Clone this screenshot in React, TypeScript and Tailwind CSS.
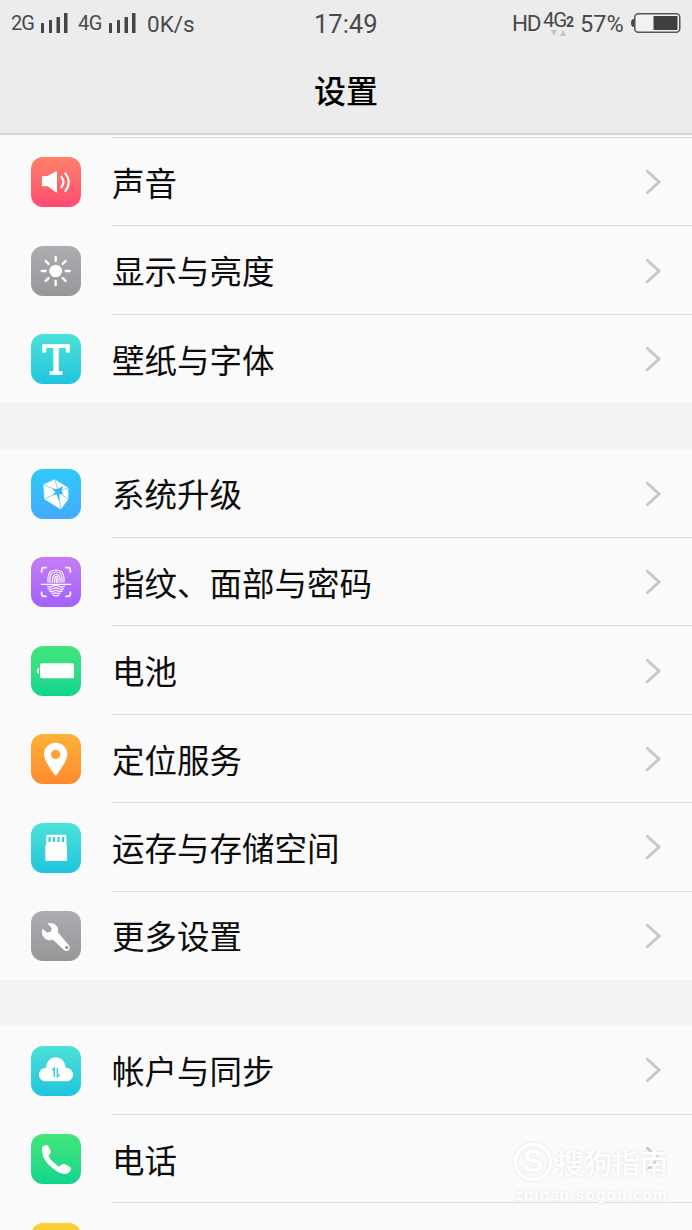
import React from "react";

type Item = { label: string; bg: string; icon: React.ReactNode };

const SoundIcon = () => (
  <>
    <path d="M35 57h15l25-14q3-1 3 2v60q0 3-3 1l-25-18h-15q-2 0-2-2v-27q0-2 2-2z" fill="#fff" />
    <path d="M91 60q13 15 0 31M103 49q21 26 0 53" fill="none" stroke="#fff" strokeWidth="6.500" strokeLinecap="round" />
  </>
);

const SunIcon = () => (
  <>
    <circle cx="74" cy="75" r="19" fill="#fff" />
    {[0, 45, 90, 135, 180, 225, 270, 315].map((deg) => (
      <path
        key={deg}
        d="M74 33v12"
        stroke="#fff"
        strokeWidth="7"
        strokeLinecap="round"
        transform={`rotate(${deg} 74 75)`}
      />
    ))}
  </>
);

const FontIcon = () => (
  <text
    x="74.5"
    y="119"
    textAnchor="middle"
    fontSize="120"
    fill="#fff"
    stroke="#fff"
    strokeWidth="4"
    className="font-['DejaVu_Serif',serif]"
  >
    T
  </text>
);

const UpgradeIcon = () => (
  <>
    <path d="M71 32l40 25v34l-22 29-48-30-3-43z" fill="#fff" stroke="#fff" strokeWidth="2" strokeLinejoin="round" />
    <path d="M83 68L71 32M84 66l27-9M84 70l28 21M83 70l6 50M82 70l-41 20M82 66L38 47" stroke="#45b9fb" strokeWidth="2" />
    <path d="M64 59l16 1 17-9-6 14 6 11-12-1-2 20-6-19-12 3 8-10z" fill="#32b5f8" />
  </>
);

const FingerprintIcon = () => (
  <g fill="none" stroke="#fff" strokeLinecap="round">
    <path d="M32 45v-7q0-6 6-6h7M105 32h7q6 0 6 6v7M118 105v7q0 6-6 6h-7M45 118h-7q-6 0-6-6v-7" strokeWidth="5" />
    <path d="M31 82h88" strokeWidth="4" />
    <path
      d="M51 75V62q2-23 24-23t24 23v13M57 76V63q1-18 18-18t18 18v13M63 76q3-4 2-12 1-12 10-12 11 0 12 13v11M70 76q2-6 1-12 1-6 4-6 6 0 6 8v10M76 76V65M50 88q7 5 14 0 10-5 20 0 8 5 16 0M51 95q8 4 15 0 9-5 17 0 8 4 15 0M55 102q7 3 13 0 7-4 13 0 7 3 13 0M61 108q7 2 12-1 8 4 15 1M66 114q9 5 18 0"
      strokeWidth="3.500"
    />
  </g>
);

const BatteryIcon = () => (
  <>
    <rect x="27" y="52" width="102" height="45" rx="5" fill="#fff" />
    <path d="M24 65v19q-7-1-7-9.500t7-9.500z" fill="#fff" />
  </>
);

const LocationIcon = () => (
  <path
    d="M74 26c20 0 35 15 35 34 0 17-13 36-32 62q-3 3-6 0C52 96 39 77 39 60c0-19 15-34 35-34zm0 21a14 14 0 1 0 0 28 14 14 0 0 0 0-28z"
    fill="#fff"
    fillRule="evenodd"
  />
);

const StorageIcon = () => (
  <>
    <path d="M48 35h55q3 0 3 3v26l2 4v42q0 4-4 4H47q-4 0-4-4V68l3-4V38q0-3 2-3z" fill="#fff" />
    <path d="M55.500 42v15M69 42v15M82.500 42v15M96 42v15" stroke="#3acbd5" strokeWidth="6.500" />
  </>
);

const WrenchIcon = () => (
  <path
    d="M49 37l13 15-1 9-12 4-14-12q-5 13 1 23t16 12q7 1 12-3l34 31q9 8 16 0 6-8-3-16L80 63q4-13-6-21-10-9-25-5zm56 68a5 5 0 1 1-1 8 5 5 0 0 1 1-8z"
    fill="#fff"
    fillRule="evenodd"
  />
);

const CloudIcon = () => (
  <>
    <path d="M45 106c-12 0-21-8-21-20s9-20 21-20c1-19 13-32 29-32s28 12 30 31c13 0 22 9 22 21s-9 20-21 20z" fill="#fff" />
    <path d="M64 73l6-6v26M79 66v26l7-6" fill="none" stroke="#43c9d8" strokeWidth="4.500" />
  </>
);

const PhoneIcon = () => (
  <path
    d="M33 42q2-7 11-9 7-1 9 5l6 13q2 6-3 10l-4 5q11 20 33 32l6-6q5-4 11-1l14 7q7 4 3 10-6 12-18 12-16 0-36-17Q35 80 33 50z"
    fill="#fff"
  />
);

const groups: Item[][] = [
  [
    { label: "声音", bg: "bg-linear-to-b from-[#ff8068] to-[#fd4a72]", icon: <SoundIcon /> },
    { label: "显示与亮度", bg: "bg-linear-to-b from-[#adadb1] to-[#97979a]", icon: <SunIcon /> },
    { label: "壁纸与字体", bg: "bg-linear-to-b from-[#4be1d9] to-[#1cc5dc]", icon: <FontIcon /> },
  ],
  [
    { label: "系统升级", bg: "bg-linear-to-b from-[#2bcbfd] to-[#43aafb]", icon: <UpgradeIcon /> },
    { label: "指纹、面部与密码", bg: "bg-linear-to-b from-[#c77bf5] to-[#a261fa]", icon: <FingerprintIcon /> },
    { label: "电池", bg: "bg-linear-to-b from-[#43e67b] to-[#0bd58d]", icon: <BatteryIcon /> },
    { label: "定位服务", bg: "bg-linear-to-b from-[#fdb137] to-[#fe8b2d]", icon: <LocationIcon /> },
    { label: "运存与存储空间", bg: "bg-linear-to-b from-[#4be1d9] to-[#1cc5dc]", icon: <StorageIcon /> },
    { label: "更多设置", bg: "bg-linear-to-b from-[#adadb1] to-[#97979a]", icon: <WrenchIcon /> },
  ],
  [
    { label: "帐户与同步", bg: "bg-linear-to-b from-[#4be1d9] to-[#1cc5dc]", icon: <CloudIcon /> },
    { label: "电话", bg: "bg-linear-to-b from-[#43e67b] to-[#0bd58d]", icon: <PhoneIcon /> },
    { label: "", bg: "bg-linear-to-b from-[#fcd036] to-[#fdb92d]", icon: null },
  ],
];

const Signal = () => (
  <svg width="27" height="20" viewBox="0 0 27 20" className="mt-[13px] shrink-0" fill="#444">
    <rect x="0" y="10" width="3" height="10" rx="0.5" />
    <rect x="8" y="7" width="3" height="13" rx="0.5" />
    <rect x="15.500" y="4" width="3.500" height="16" rx="0.5" />
    <rect x="23" y="0" width="3.500" height="20" rx="0.5" />
  </svg>
);

const StatusBar = () => (
  <div className="flex h-12 items-start whitespace-nowrap font-[Roboto,sans-serif] leading-[30px] text-[#4a4a4a]">
    <div className="flex w-[314px] items-start pl-[11px]">
      <span className="mt-2 w-[30px] text-[20px] tracking-[-1px]">2G</span>
      <Signal />
      <span className="mt-2 ml-[10px] w-[31px] text-[20px] tracking-[-0.5px]">4G</span>
      <Signal />
      <span className="mt-[9px] ml-[11px] text-[22.500px]">0K/s</span>
    </div>
    <span className="mt-[9px] w-[198px] text-[25.500px]">17:49</span>
    <span className="mt-2 w-[31px] text-[22.500px] tracking-[-1.300px]">HD</span>
    <div className="w-[37px]">
      <div className="mt-[5px] flex h-[25px]">
        <span className="text-[20.500px] tracking-[-1.200px]">4G</span>
        <span className="mt-[2px] text-[14px] font-bold">2</span>
      </div>
      <svg width="16" height="6" viewBox="0 0 16 6" className="ml-[8px]" fill="#c3c3c3">
        <path d="M0 0h6L3 6zM9 6h6l-3-6z" />
      </svg>
    </div>
    <span className="mt-[9px] w-[51px] text-[23.500px]">57%</span>
    <svg width="50" height="20" viewBox="0 0 50 20" className="mt-[13px] shrink-0">
      <path d="M3 6Q0 6 0 10t3 4z" fill="#4a4a4a" />
      <rect x="3.750" y="0.750" width="45" height="18.500" rx="3.500" fill="#f2f2f2" stroke="#555" strokeWidth="1.500" />
      <rect x="22.500" y="3" width="24" height="14" rx="0.5" fill="#3f3f3f" />
    </svg>
  </div>
);

const Row = ({ item, last }: { item: Item; last: boolean }) => (
  <div className="flex h-[88.4px] items-center pl-[31px]">
    <div className={`mt-[0.5px] size-[50px] shrink-0 rounded-[12px] ${item.bg}`}>
      <svg viewBox="0 0 150 150" className="size-full">
        {item.icon}
      </svg>
    </div>
    <div
      className={`ml-[31px] flex h-full flex-1 items-center justify-between border-b pr-[31px] ${
        last ? "border-transparent" : "border-[#dcdcdc]"
      }`}
    >
      <span className="pt-px text-[32.500px] text-[#0c0c0c]">{item.label}</span>
      <svg width="16" height="26" viewBox="0 0 16 26" fill="none" stroke="#c8c8c8" strokeWidth="3" className="mt-px">
        <path d="M1.500 1.500L14 13 1.500 24.500" />
      </svg>
    </div>
  </div>
);

const Watermark = () => (
  <div className="absolute top-[1141px] left-[514px] w-[156px] whitespace-nowrap text-white [text-shadow:0_0_3px_#dedede]">
    <div className="flex h-[42px] items-center">
      <div className="flex size-[38px] items-center justify-center rounded-full border-[3px] border-white font-['Liberation_Sans',sans-serif] text-[31px] font-bold shadow-[0_0_3px_#dedede,inset_0_0_3px_#dedede]">
        S
      </div>
      <span className="ml-[4px] text-[28px] font-medium">搜狗指南</span>
    </div>
    <div className="ml-px font-['Liberation_Sans',sans-serif] text-[15.500px] leading-[24px] font-bold tracking-[1.050px]">
      zhinan.sogou.com
    </div>
  </div>
);

export default function App() {
  return (
    <div className="relative h-[1230px] w-[692px] overflow-hidden bg-[#fafafa] font-['Noto_Sans_CJK_SC',sans-serif]">
      <header className="h-[135px] border-b-2 border-[#d6d6d6] bg-[#ececec]">
        <StatusBar />
        <h1 className="text-center text-[32px] leading-[82px] font-medium text-black">设置</h1>
      </header>
      <div className="ml-[112px] h-[3px] border-b border-[#dcdcdc]" />
      <main className="flex flex-col gap-[46.4px] bg-[#f3f3f3]">
        {groups.map((items, g) => (
          <section key={g} className="bg-[#fafafa]">
            {items.map((item, i) => (
              <Row key={i} item={item} last={i === items.length - 1} />
            ))}
          </section>
        ))}
      </main>
      <Watermark />
    </div>
  );
}
